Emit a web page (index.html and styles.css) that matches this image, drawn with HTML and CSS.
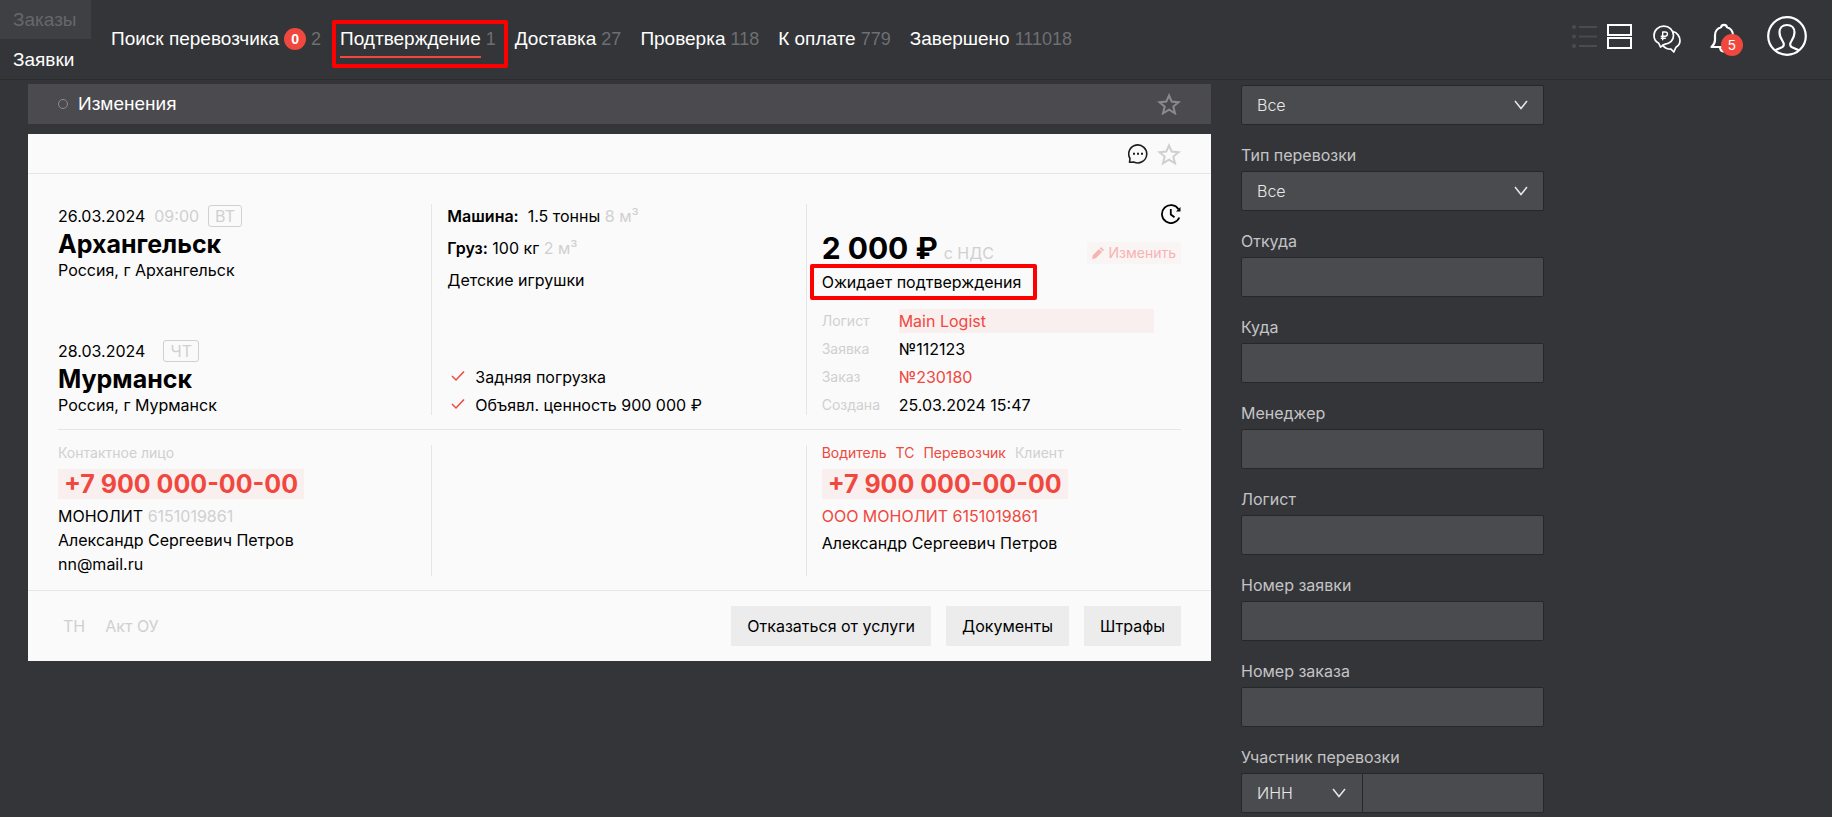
FILE: index.html
```html
<!DOCTYPE html>
<html lang="ru">
<head>
<meta charset="utf-8">
<title>Заявки</title>
<meta name="viewport" content="width=device-width, initial-scale=1">
<link rel="stylesheet" href="styles.css">
</head>
<body>
<header class="topbar">
  <nav class="sections" aria-label="Разделы">
    <a class="section" href="#">Заказы</a>
    <a class="section section-active" href="#">Заявки</a>
  </nav>
  <nav class="statuses" aria-label="Статусы">
    <a class="status" href="#"><span>Поиск перевозчика</span><span class="badge">0</span><span class="count">2</span></a>
    <a class="status status-active marked marked-nav" href="#"><span class="status-name">Подтверждение</span><span class="count">1</span></a>
    <a class="status" href="#"><span>Доставка</span><span class="count">27</span></a>
    <a class="status" href="#"><span>Проверка</span><span class="count">118</span></a>
    <a class="status" href="#"><span>К оплате</span><span class="count">779</span></a>
    <a class="status" href="#"><span>Завершено</span><span class="count">111018</span></a>
  </nav>
  <div class="tools">
    <button class="icon-btn dim" aria-label="Список"><svg width="26" height="26" viewBox="0 0 26 26" fill="currentColor"><circle cx="2" cy="3" r="2"/><circle cx="2" cy="12.500" r="2"/><circle cx="2" cy="22" r="2"/><path d="M7 2h18v2H7zM7 11.500h18v2H7zM7 21h18v2H7z"/></svg></button>
    <button class="icon-btn" aria-label="Карточки"><svg width="25" height="26" viewBox="0 0 25 26" fill="none" stroke="currentColor" stroke-width="2"><path d="M1 1h23v10H1zM1 14h23v10H1z"/></svg></button>
    <button class="icon-btn btn-rate" aria-label="Ставки"><svg width="28" height="28" viewBox="0 0 28 28" fill="none" stroke="currentColor" stroke-width="1.700" stroke-linecap="round" stroke-linejoin="round"><path d="M7.500 22 5.800 18.300C3 17 1 14 1 10.500 1 5.300 5.300 1.200 10.800 1.200S20.500 5.300 20.500 10.500 16 18.500 11.500 19.300L7.500 22z"/><path d="M20 6.500C24 7.500 27 11.500 27 15.500c0 3-1.500 5.300-4 6.700L20.800 27 18 24.200c-3.500 0-6.500-1.500-8.200-4"/><path d="M9.700 14.800V7h2.500c3 0 3 4.200 0 4.200H8.300M8.300 13.200h4" stroke-width="1.400"/></svg></button>
    <button class="icon-btn btn-bell" aria-label="Уведомления"><svg width="28" height="30" viewBox="0 0 28 30" fill="none" stroke="currentColor" stroke-width="2.200" stroke-linejoin="round"><path d="M1.500 24c2.200-2 3.500-3.500 3.500-7v-4.500C5 8.500 7.500 5.200 11 4.300 11.500 1 16.500 1 17 4.300c3.500.9 6 4.200 6 8.200V17c0 3.500 1.300 5 3.500 7z"/><path d="M10 24.500c.5 3 1.800 4 4 4"/></svg><span class="badge badge-bell">5</span></button>
    <button class="icon-btn btn-user" aria-label="Профиль"><svg width="40" height="40" viewBox="0 0 40 40" fill="none" stroke="currentColor" stroke-width="2.200" stroke-linejoin="round"><circle cx="20" cy="20" r="18.800"/><path d="M8 34.500c2-1.500 5-2.300 7.500-3.500 1.800-1 1.700-3.500 0-6C13.500 22 12.500 19.500 12.500 16.500c0-4.500 3-7.500 7.500-7.500s7.500 3 7.500 7.500c0 3-1 5.500-3 8.500-1.700 2.500-1.800 5 0 6 2.500 1.200 5.500 2 7.500 3.500"/></svg></button>
  </div>
</header>

<main class="page">
  <div class="orders">
    <section class="changes">
      <span class="dot"></span>
      <h2 class="changes-title">Изменения</h2>
      <button class="icon-btn star-dark" aria-label="В избранное"><svg width="24" height="22" viewBox="0 0 24 22" fill="none" stroke="currentColor" stroke-width="2"><path d="M12 2.500l2.700 6.100 6.800.6-5.200 4.400 1.700 6.700-6-3.700-6 3.700 1.700-6.700L2.500 9.200l6.800-.6z"/></svg></button>
    </section>

    <article class="card">
      <div class="card-top">
        <button class="icon-btn comment" aria-label="Комментарии"><svg width="20" height="20" viewBox="0 0 20 20" fill="none" stroke="currentColor" stroke-width="1.600" stroke-linejoin="round"><path d="M1.500 18.300 2 14.500a9 9 0 1 1 3.800 3.500z"/><path d="M5 9.800h2M9 9.800h2M13 9.800h2" stroke-width="2"/></svg></button>
        <button class="icon-btn star-light" aria-label="В избранное"><svg width="24" height="22" viewBox="0 0 24 22" fill="none" stroke="currentColor" stroke-width="2"><path d="M12 2.500l2.700 6.100 6.800.6-5.200 4.400 1.700 6.700-6-3.700-6 3.700 1.700-6.700L2.500 9.200l6.800-.6z"/></svg></button>
      </div>

      <div class="card-body">
        <div class="columns">
          <div class="column">
            <div class="point">
              <div class="point-date"><span>26.03.2024</span><span class="muted">09:00</span><span class="weekday">ВТ</span></div>
              <h3 class="city">Архангельск</h3>
              <p class="address">Россия, г Архангельск</p>
            </div>
            <div class="point">
              <div class="point-date"><span>28.03.2024</span><span></span><span class="weekday">ЧТ</span></div>
              <h3 class="city">Мурманск</h3>
              <p class="address">Россия, г Мурманск</p>
            </div>
          </div>

          <div class="column">
            <div class="cargo">
              <p><b>Машина:</b>&nbsp; 1.5 тонны <span class="muted">8 м³</span></p>
              <p><b>Груз:</b> 100 кг <span class="muted">2 м³</span></p>
              <p>Детские игрушки</p>
            </div>
            <ul class="options">
              <li class="option"><svg class="tick" width="14" height="12" viewBox="0 0 14 12" fill="none" stroke="currentColor" stroke-width="1.500"><path d="M1 5l4 4 8-8.500"/></svg>Задняя погрузка</li>
              <li class="option"><svg class="tick" width="14" height="12" viewBox="0 0 14 12" fill="none" stroke="currentColor" stroke-width="1.500"><path d="M1 5l4 4 8-8.500"/></svg>Объявл. ценность 900 000 ₽</li>
            </ul>
          </div>

          <div class="column">
            <div class="deal">
              <button class="icon-btn history" aria-label="История"><svg width="20" height="20" viewBox="0 0 20 20" fill="none" stroke="currentColor" stroke-width="1.800"><path d="M17.500 5.200A9 9 0 1 0 18.300 13.500"/><path d="M9.800 5v5.500l3.700 2.800"/><path d="M19.500 3v4.500H15z" fill="currentColor" stroke="none"/></svg></button>
              <div class="price-row">
                <span class="price">2 000 ₽</span><span class="muted">с НДС</span>
                <button class="edit"><svg width="12" height="12" viewBox="0 0 12 12" fill="currentColor"><path d="M0 12l.8-3.800L7 2l3 3-6.200 6.200zM7.800 1.200 9 0l3 3-1.200 1.200z"/></svg>Изменить</button>
              </div>
              <p class="deal-state"><span class="marked marked-state">Ожидает подтверждения</span></p>
            </div>
            <dl class="facts">
              <dt>Логист</dt><dd class="highlight"><a class="link" href="#">Main Logist</a></dd>
              <dt>Заявка</dt><dd>№112123</dd>
              <dt>Заказ</dt><dd><a class="link" href="#">№230180</a></dd>
              <dt>Создана</dt><dd>25.03.2024 15:47</dd>
            </dl>
          </div>
        </div>

        <div class="columns contacts">
          <div class="column">
            <div class="roles"><span class="muted">Контактное лицо</span></div>
            <a class="phone" href="#">+7 900 000-00-00</a>
            <p class="line">МОНОЛИТ <span class="muted">6151019861</span></p>
            <p class="line">Александр Сергеевич Петров</p>
            <p class="line">nn@mail.ru</p>
          </div>
          <div class="column"></div>
          <div class="column">
            <div class="roles"><a class="link" href="#">Водитель</a><a class="link" href="#">ТС</a><a class="link" href="#">Перевозчик</a><span class="muted">Клиент</span></div>
            <a class="phone" href="#">+7 900 000-00-00</a>
            <p class="line"><a class="link" href="#">ООО МОНОЛИТ 6151019861</a></p>
            <p class="line line-last">Александр Сергеевич Петров</p>
          </div>
        </div>
      </div>

      <footer class="card-footer">
        <span class="doc">ТН</span><span class="doc">Акт ОУ</span>
        <div class="actions">
          <button class="action">Отказаться от услуги</button>
          <button class="action">Документы</button>
          <button class="action">Штрафы</button>
        </div>
      </footer>
    </article>
  </div>

  <form class="filters">
    <div class="select-box"><select class="field" aria-label="Статус"><option>Все</option></select><svg class="chevron" width="14" height="10" viewBox="0 0 14 10" fill="none" stroke="currentColor" stroke-width="1.500"><path d="M1 1l6 7.500L13 1"/></svg></div>
    <label class="label" for="kind">Тип перевозки</label>
    <div class="select-box"><select class="field" id="kind"><option>Все</option></select><svg class="chevron" width="14" height="10" viewBox="0 0 14 10" fill="none" stroke="currentColor" stroke-width="1.500"><path d="M1 1l6 7.500L13 1"/></svg></div>
    <label class="label" for="from">Откуда</label>
    <input class="field" id="from" type="text">
    <label class="label" for="to">Куда</label>
    <input class="field" id="to" type="text">
    <label class="label" for="manager">Менеджер</label>
    <input class="field" id="manager" type="text">
    <label class="label" for="logist">Логист</label>
    <input class="field" id="logist" type="text">
    <label class="label" for="request">Номер заявки</label>
    <input class="field" id="request" type="text">
    <label class="label" for="order">Номер заказа</label>
    <input class="field" id="order" type="text">
    <label class="label" for="member">Участник перевозки</label>
    <div class="field-pair">
      <div class="select-box"><select class="field field-left" aria-label="Вид номера"><option>ИНН</option></select><svg class="chevron" width="14" height="10" viewBox="0 0 14 10" fill="none" stroke="currentColor" stroke-width="1.500"><path d="M1 1l6 7.500L13 1"/></svg></div>
      <input class="field field-right" id="member" type="text">
    </div>
  </form>
</main>
</body>
</html>
```

FILE: styles.css
```css
* { box-sizing: border-box; margin: 0; padding: 0; }

body {
  min-height: 100vh;
  background: #343538;
  color: #000;
  font-family: Inter, "Liberation Sans", sans-serif;
  font-size: 16px;
  font-weight: 400;
  line-height: 20px;
}

a { color: inherit; text-decoration: none; }
ul { list-style: none; }
b { font-weight: 600; }
svg { display: block; }
button, input, select { font: inherit; color: inherit; }

.muted { color: #d0d0d0; }
.link { color: #f0483e; }

.icon-btn { display: block; border: 0; background: none; color: inherit; cursor: pointer; }

/* top bar */
.topbar {
  display: flex;
  align-items: flex-start;
  height: 80px;
  border-bottom: 1px solid #2b2c2e;
  color: #fff;
  font-family: "Liberation Sans", sans-serif;
}

.sections { width: 91px; }
.section {
  display: block;
  padding-left: 13px;
  font-size: 19px;
  line-height: 39px;
  background: #3f4044;
  color: #66676a;
}
.section-active { background: none; color: #fff; line-height: 41px; }

.statuses { display: flex; gap: 19px; padding: 26px 0 0 20px; }
.status {
  display: flex;
  align-items: center;
  gap: 5px;
  height: 26px;
  font-size: 19px;
  white-space: nowrap;
}
.count { color: #6e6f72; font-size: 18px; }
.status-name { line-height: 26px; border-bottom: 2px solid #f0483e; padding: 6px 0 4px; }
.badge {
  display: flex;
  align-items: center;
  justify-content: center;
  width: 22px;
  height: 22px;
  border-radius: 50%;
  background: #f0483e;
  color: #fff;
  font-size: 14px;
  font-weight: 700;
}

/* red frames laid over the interface */
.marked { position: relative; }
.marked::after {
  content: "";
  position: absolute;
  border: 4px solid #f00;
  border-radius: 2px;
  pointer-events: none;
}
.marked-nav::after { inset: -6px -12px -16px -8px; }
.marked-state::after { inset: -8px -16px -8px -12px; }

.tools { display: flex; align-items: flex-start; margin-left: auto; padding: 16px 25px 0 0; }
.tools .icon-btn { margin: 8px 9px 0 0; }
.tools .dim { color: #4a4b4f; }
.tools .btn-rate { margin: 9px 29px 0 12px; }
.tools .btn-bell { position: relative; margin-right: 29px; margin-top: 7px; }
.tools .btn-user { margin: 0; }
.badge-bell { position: absolute; left: 11px; top: 11px; font-weight: 400; }

/* page grid */
.page {
  display: grid;
  grid-template-columns: minmax(0, 1183fr) minmax(0, 303fr) minmax(0, 258fr);
  gap: 30px;
  padding: 4px 0 4px 28px;
  align-items: start;
}

.changes {
  display: flex;
  align-items: center;
  height: 40px;
  margin-bottom: 10px;
  padding: 0 30px;
  background: #4b4a4e;
  color: #fff;
}
.dot { width: 10px; height: 10px; margin-right: 10px; border: 1px solid #8d8d90; border-radius: 50%; }
.changes-title { font-family: "Liberation Sans", sans-serif; font-size: 19px; font-weight: 400; }
.star-dark { margin-left: auto; color: #8b8b8e; }

/* order card */
.card { background: #fafafa; }
.card-top {
  display: flex;
  align-items: center;
  justify-content: flex-end;
  gap: 9px;
  height: 40px;
  padding: 0 30px;
  border-bottom: 1px solid #e6e6e6;
}
.comment { color: #1e1e1e; }
.star-light { color: #cfcfcf; }

.card-body { padding: 30px 30px 14px; }
.columns { display: grid; grid-template-columns: repeat(3, minmax(0, 1fr)); }
.column { display: flex; flex-direction: column; justify-content: space-between; border-right: 1px solid #e6e6e6; }
.column + .column { padding-left: 15px; }
.column:last-child { border-right: 0; }

.point-date { display: flex; align-items: center; gap: 9px; height: 24px; }
.weekday {
  padding: 0 6px;
  border: 1px solid #d0d0d0;
  border-radius: 3px;
  color: #d0d0d0;
}
.city { font-size: 25px; font-weight: 700; line-height: 32px; }

.cargo { display: grid; gap: 8px; line-height: 24px; }
.options { display: grid; gap: 8px; }
.option { display: flex; align-items: center; gap: 10px; padding-left: 4px; }
.tick { color: #f0483e; }

.history { margin-left: auto; }
.price-row { display: flex; align-items: baseline; gap: 6px; margin-top: 6px; line-height: 36px; }
.price { font-size: 30px; font-weight: 700; }
.edit {
  display: flex;
  align-items: center;
  gap: 4px;
  margin-left: auto;
  padding: 0 5px;
  border: 0;
  background: #faf5f5;
  color: #f6b3b0;
  font-size: 14px;
  line-height: 22px;
}
.deal-state { margin: 1px 0 19px; }

.facts { display: grid; grid-template-columns: 77px 255px; gap: 8px 0; }
.facts dt { color: #d0d0d0; font-size: 14px; }
.facts .highlight { margin: -2px 0; padding: 2px 0; background: #f9efee; }

.contacts { margin-top: 14px; border-top: 1px solid #e6e6e6; padding-top: 15px; }
.contacts .column { justify-content: flex-start; align-items: flex-start; }
.roles { display: flex; gap: 9px; font-size: 14px; line-height: 16px; }
.phone {
  margin: 8px 0 5px;
  padding: 0 6px;
  background: #f9efee;
  color: #f0483e;
  font-size: 25px;
  font-weight: 700;
  line-height: 30px;
}
.line { line-height: 24px; }
.line-last { margin-top: 3px; }

.card-footer {
  display: flex;
  align-items: center;
  gap: 20px;
  padding: 15px 30px 15px 35px;
  border-top: 1px solid #e6e6e6;
}
.doc { color: #d0d0d0; }
.actions { display: flex; gap: 15px; margin-left: auto; }
.action { height: 40px; padding: 0 16px; border: 0; background: #ececec; cursor: pointer; }

/* filters */
.filters { padding-top: 1px; color: #e8e8e8; }
.label { display: block; margin: 20px 0 6px; color: #c4c4c6; }
.field {
  display: block;
  width: 100%;
  height: 40px;
  padding: 0 15px;
  border: 1px solid #262729;
  border-radius: 2px;
  background: #4a4b4e;
  font-weight: 300;
  appearance: none;
}
.select-box { position: relative; }
.chevron { position: absolute; right: 16px; top: 15px; pointer-events: none; }
.field-pair { display: grid; grid-template-columns: 2fr 3fr; }
.field-left { border-right: 0; border-radius: 2px 0 0 2px; }
.field-right { border-radius: 0 2px 2px 0; }
```
